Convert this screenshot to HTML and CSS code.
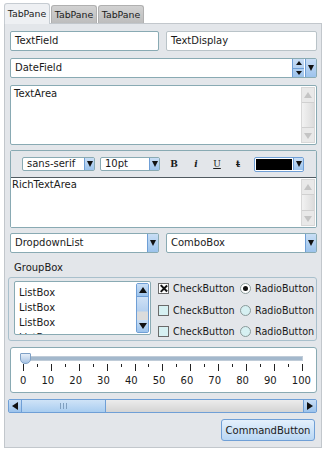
FILE: index.html
```html
<!DOCTYPE html>
<html>
<head>
    <title>Widgets</title>
    <link rel="stylesheet" href="styles.css">
</head>
<body>
    <div class="tabs">
        <div class="tab tab-active">TabPane</div>
        <div class="tab">TabPane</div>
        <div class="tab">TabPane</div>
    </div>
    <div class="pane">
        <div class="row">
            <div class="field half">TextField</div>
            <div class="field half display">TextDisplay</div>
        </div>
        <div class="field select">
            <span class="grow">DateField</span>
            <span class="spin"><span class="spin-up"></span><span class="spin-down"></span></span>
            <span class="drop"><i class="tri-down"></i></span>
        </div>
        <div class="area">
            <div class="area-text">TextArea</div>
            <div class="vscroll gray">
                <span class="arrow-up light"></span>
                <span class="vthumb"></span>
                <span class="arrow-down light"></span>
            </div>
        </div>
        <div class="rich">
            <div class="toolbar">
                <div class="mini font-sel"><span class="grow">sans-serif</span><span class="drop"><i class="tri-down"></i></span></div>
                <div class="mini size-sel"><span class="grow">10pt</span><span class="drop"><i class="tri-down"></i></span></div>
                <span class="fmt fmt-b">B</span>
                <span class="fmt fmt-i">i</span>
                <span class="fmt fmt-u">U</span>
                <span class="fmt fmt-s">t</span>
                <div class="color-sel"><span class="swatch"></span><span class="drop"><i class="tri-down"></i></span></div>
            </div>
            <div class="rich-body">
                <div class="area-text">RichTextArea</div>
                <div class="vscroll gray">
                    <span class="arrow-up light"></span>
                    <span class="vthumb"></span>
                    <span class="arrow-down light"></span>
                </div>
            </div>
        </div>
        <div class="row row-lists">
            <div class="field half select"><span class="grow">DropdownList</span><span class="drop"><i class="tri-down"></i></span></div>
            <div class="field half select"><span class="grow">ComboBox</span><span class="drop"><i class="tri-down"></i></span></div>
        </div>
        <div class="group-label">GroupBox</div>
        <div class="group">
            <div class="listbox">
                <div class="list-items">
                    <div>ListBox</div>
                    <div>ListBox</div>
                    <div>ListBox</div>
                    <div class="peek">ListBox</div>
                </div>
                <div class="vscroll blue">
                    <span class="arrow-up"></span>
                    <span class="bthumb"></span>
                    <span class="btrack"></span>
                    <span class="arrow-down"></span>
                </div>
            </div>
            <div class="checks">
                <label class="opt"><span class="check checked"></span>CheckButton</label>
                <label class="opt"><span class="radio checked"></span>RadioButton</label>
                <label class="opt"><span class="check"></span>CheckButton</label>
                <label class="opt"><span class="radio"></span>RadioButton</label>
                <label class="opt"><span class="check"></span>CheckButton</label>
                <label class="opt"><span class="radio"></span>RadioButton</label>
            </div>
        </div>
        <div class="slider">
            <div class="track"><span class="knob"></span></div>
            <div class="ticks">
                <i class="major"></i><i></i><i class="major"></i><i></i><i class="major"></i><i></i><i class="major"></i><i></i><i class="major"></i><i></i><i class="major"></i><i></i><i class="major"></i><i></i><i class="major"></i><i></i><i class="major"></i><i></i><i class="major"></i><i></i><i class="major"></i>
            </div>
            <div class="labels">
                <span>0</span><span>10</span><span>20</span><span>30</span><span>40</span><span>50</span><span>60</span><span>70</span><span>80</span><span>90</span><span>100</span>
            </div>
        </div>
        <div class="hscroll">
            <span class="hbtn"><i class="tri-left"></i></span>
            <span class="hthumb"><i class="grip"></i></span>
            <span class="htrack"></span>
            <span class="hbtn"><i class="tri-right"></i></span>
        </div>
        <div class="actions">
            <button class="cmd">CommandButton</button>
        </div>
    </div>
</body>
</html>
```

FILE: styles.css
```css
body { margin: 0; background: #fff; font-family: "DejaVu Sans", sans-serif; font-size: 10px; color: #1a1a1a; }

.tabs { display: flex; padding: 3px 0 0 4px; height: 23px; box-sizing: border-box; align-items: flex-end; }
.tab { height: 18px; width: 46px; text-align: center; font-size: 9.4px; line-height: 18px; background: linear-gradient(#d2d2d2, #bdbdbd); border: 1px solid #b0b0b0; border-bottom: none; border-radius: 3px 3px 0 0; margin-right: 1px; box-sizing: border-box; }
.tab-active { height: 21px; line-height: 20px; background: #eef0f3; border-color: #c6ccd2; position: relative; top: 1px; }

.pane { margin-left: 4px; width: 318px; height: 425px; box-sizing: border-box; background: #e3e6ea; border: 1px solid #c2c7cc; padding: 7px 4px 0 5px; display: flex; flex-direction: column; }

.row { display: flex; justify-content: space-between; }
.field { height: 20px; box-sizing: border-box; border: 1px solid #89aab3; border-radius: 2px; background: #fff; padding: 0 4px; line-height: 18px; display: flex; align-items: center; }
.half { width: 149px; }
.row .half + .half { width: 151px; }
.display { border-color: #b9c3c8; }
.select { padding-right: 0; margin-top: 7px; }
.row .select { margin-top: 0; }
.row-lists { margin-top: 5px; }
.grow { flex: 1; }

.drop { width: 11px; height: 18px; box-sizing: border-box; background: linear-gradient(#c9def5, #9cc3ec); border-left: 1px solid #6f9fd6; display: flex; align-items: center; justify-content: center; }
.tri-down { width: 0; height: 0; border-left: 3px solid transparent; border-right: 3px solid transparent; border-top: 6px solid #111; }
.spin { width: 11px; height: 18px; display: flex; flex-direction: column; background: linear-gradient(#c9def5, #9cc3ec); border-left: 1px solid #6f9fd6; margin-right: 1px; }
.spin-up, .spin-down { flex: 1; display: flex; align-items: center; justify-content: center; }
.spin-up::after { content: ""; border-left: 3px solid transparent; border-right: 3px solid transparent; border-bottom: 4px solid #111; }
.spin-down::after { content: ""; border-left: 3px solid transparent; border-right: 3px solid transparent; border-top: 4px solid #111; }
.spin-up { border-bottom: 1px solid #6f9fd6; }

.area { margin-top: 7px; height: 60px; box-sizing: border-box; border: 1px solid #89aab3; border-radius: 2px; background: #fff; display: flex; }
.area-text { flex: 1; padding: 2px 3px; }

.vscroll { width: 14px; display: flex; flex-direction: column; margin: 1px 1px 1px 0; box-sizing: border-box; }
.vscroll.gray { background: #e9e9e9; border: 1px solid #d8d8d8; }
.vthumb { flex: 1; margin: 1px 0; background: linear-gradient(90deg, #f2f2f2, #dcdcdc); border-top: 1px solid #d0d0d0; border-bottom: 1px solid #d0d0d0; }
.arrow-up, .arrow-down { height: 13px; display: flex; align-items: center; justify-content: center; }
.arrow-up::after { content: ""; border-left: 4px solid transparent; border-right: 4px solid transparent; border-bottom: 6px solid #111; }
.arrow-down::after { content: ""; border-left: 4px solid transparent; border-right: 4px solid transparent; border-top: 6px solid #111; }
.light.arrow-up::after { border-bottom-color: #c4c4c4; }
.light.arrow-down::after { border-top-color: #c4c4c4; }

.rich { margin-top: 5px; height: 78px; box-sizing: border-box; border: 1px solid #89aab3; border-radius: 2px; display: flex; flex-direction: column; }
.toolbar { height: 27px; box-sizing: border-box; background: #e3e6ea; border-bottom: 1px solid #505a60; display: flex; align-items: center; padding: 0 0 0 11px; }
.mini { height: 14px; box-sizing: border-box; border: 1px solid #89aab3; border-radius: 2px; background: #fff; display: flex; align-items: center; padding-left: 4px; line-height: 12px; }
.mini .drop, .color-sel .drop { height: 12px; width: 10px; }
.font-sel { width: 73px; }
.size-sel { width: 60px; margin-left: 5px; }
.fmt { font-family: "DejaVu Serif", serif; font-size: 9px; width: 22px; text-align: center; }
.fmt-b { font-weight: bold; margin-left: 3px; }
.fmt-i { font-style: italic; font-weight: bold; }
.fmt-u { text-decoration: underline; width: 20px; }
.fmt-s { text-decoration: line-through; font-weight: bold; }
.color-sel { width: 50px; height: 15px; box-sizing: border-box; margin-left: 5px; border: 1px solid #6f9fd6; border-radius: 2px; background: #fff; display: flex; align-items: center; padding-left: 1px; }
.swatch { flex: 1; height: 11px; background: #000; margin-right: 1px; }
.rich-body { flex: 1; display: flex; background: #fff; }
.rich-body .area-text { padding: 1px 1px; }

.group-label { margin: 9px 0 0 4px; height: 12px; line-height: 12px; }
.group { margin: 3px 0 0 -2px; height: 64px; box-sizing: border-box; border: 1px solid #a9c0cc; border-radius: 3px; display: flex; padding: 3px 0 0 5px; }
.listbox { width: 137px; height: 54px; box-sizing: border-box; border: 1px solid #89aab3; border-radius: 2px; background: #fff; display: flex; overflow: hidden; }
.list-items { flex: 1; padding: 3px 0 0 4px; line-height: 15px; height: 52px; box-sizing: border-box; overflow: hidden; }
.peek { height: 7px; overflow: hidden; }
.vscroll.blue { width: 13px; border: 1px solid #6f9fd6; border-radius: 2px; background: #e6ecf3; }
.vscroll.blue .arrow-up, .vscroll.blue .arrow-down { background: linear-gradient(#c9def5, #9cc3ec); height: 12px; }
.bthumb { height: 14px; background: linear-gradient(#cfe1f5, #b4d0f0); border-top: 1px solid #6f9fd6; border-bottom: 1px solid #c8d6e4; }
.btrack { flex: 1; background: #dcdcdc; }
.checks { display: grid; grid-template-columns: 82px 76px; row-gap: 7px; padding: 1px 0 0 7px; font-size: 9.6px; }
.opt { display: flex; align-items: center; height: 13px; white-space: nowrap; }
.check { width: 9px; height: 9px; border: 1px solid #6a6a6a; background: #d6f0f2; margin-right: 4px; position: relative; flex: none; }
.check.checked { background: #fff; }
.check.checked::before, .check.checked::after { content: ""; position: absolute; left: 4px; top: 0; width: 1.5px; height: 9px; background: #111; }
.check.checked::before { transform: rotate(45deg); }
.check.checked::after { transform: rotate(-45deg); }
.radio { width: 9px; height: 9px; border: 1px solid #8a9a9a; border-radius: 50%; background: #d6f0f2; margin-right: 4px; display: flex; align-items: center; justify-content: center; flex: none; }
.radio.checked { background: #fff; }
.radio.checked::after { content: ""; width: 5px; height: 5px; border-radius: 50%; background: #111; }

.slider { margin-top: 6px; height: 46px; box-sizing: border-box; border: 1px solid #89aab3; border-radius: 3px; background: #fff; padding: 8px 13px 0 12px; }
.track { height: 3px; background: #a3b8cc; border: 1px solid #c0ccd8; position: relative; }
.knob { position: absolute; left: -4px; top: -4px; width: 9px; height: 9px; background: linear-gradient(#e6eef8, #a8c4e4); border: 1px solid #7ea0c6; border-radius: 1px 1px 5px 5px; }
.ticks { display: flex; justify-content: space-between; margin-top: 3px; height: 7px; }
.ticks i { width: 1px; height: 3px; background: #222; }
.ticks i.major { height: 7px; }
.labels { display: flex; justify-content: space-between; margin: 4px -8px 0 -3px; }

.hscroll { margin: 6px 0 0 -2px; width: 309px; height: 14px; box-sizing: border-box; border: 1px solid #6f9fd6; border-radius: 2px; display: flex; background: #dcdcdc; }
.hbtn { width: 12px; background: linear-gradient(#c9def5, #9cc3ec); display: flex; align-items: center; justify-content: center; }
.tri-left { border-top: 4px solid transparent; border-bottom: 4px solid transparent; border-right: 6px solid #111; }
.tri-right { border-top: 4px solid transparent; border-bottom: 4px solid transparent; border-left: 6px solid #111; }
.hthumb { width: 83px; background: linear-gradient(#cfe3f7, #a9cdf0); border-left: 1px solid #6f9fd6; border-right: 1px solid #6f9fd6; display: flex; align-items: center; justify-content: center; }
.grip { width: 5px; height: 6px; border-left: 1px solid #7f9fbf; border-right: 1px solid #7f9fbf; position: relative; }
.grip::after { content: ""; position: absolute; left: 2px; top: 0; width: 1px; height: 6px; background: #7f9fbf; }
.htrack { flex: 1; background: linear-gradient(#ececec, #d4d4d4); border-right: 1px solid #6f9fd6; }

.actions { display: flex; justify-content: flex-end; margin-top: 6px; }
.cmd { font-family: "DejaVu Sans", sans-serif; font-size: 10px; color: #1a1a1a; width: 94px; height: 22px; border: 1px solid #6f9fd6; border-radius: 3px; background: linear-gradient(#e4f0fc, #b9d7f4); padding: 0; margin-right: 2px; }
```
